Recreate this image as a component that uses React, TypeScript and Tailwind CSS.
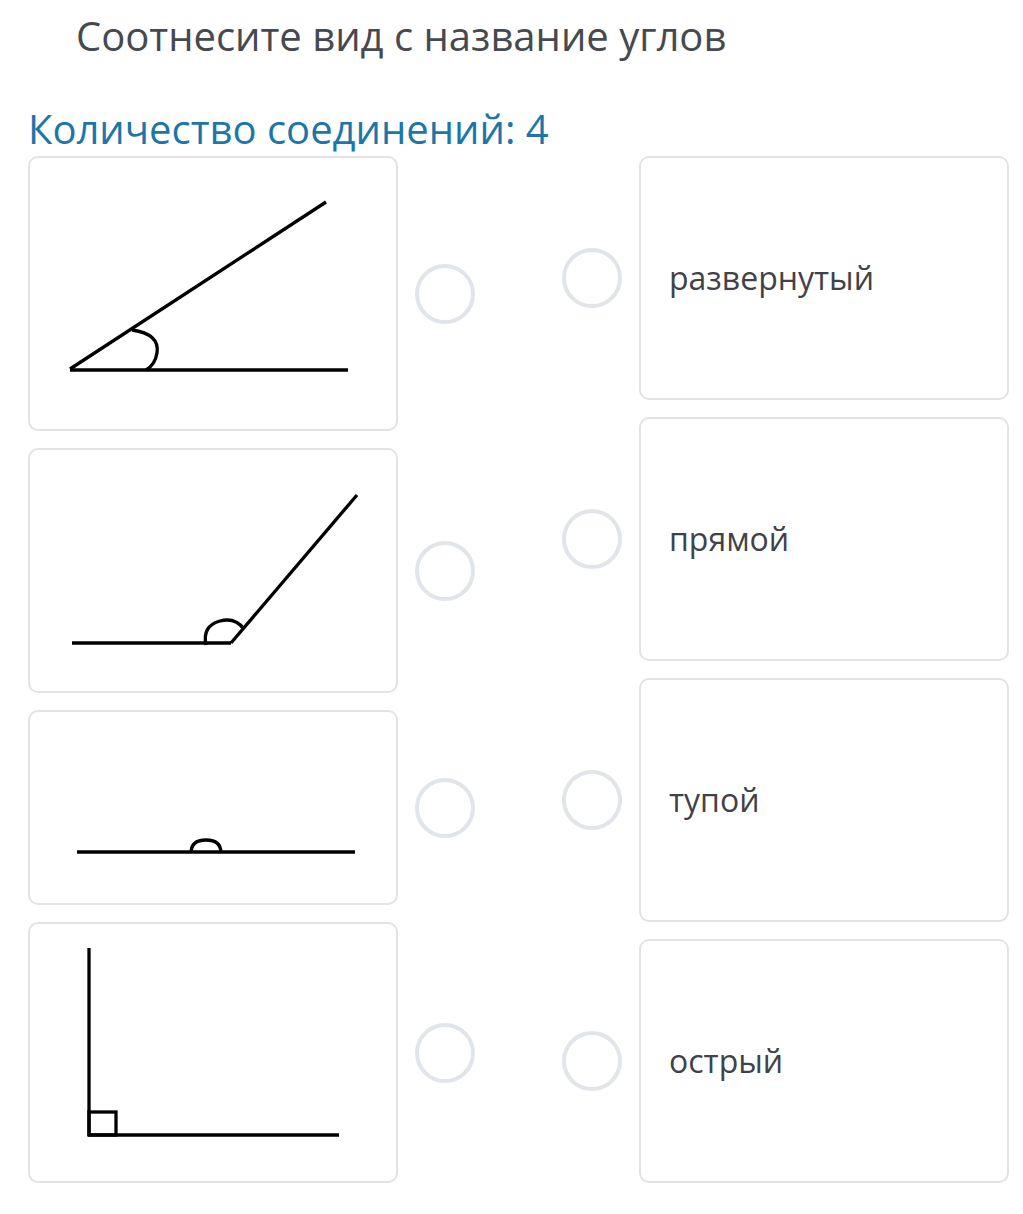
import React from "react";

const font = { fontFamily: '"Open Sans", "Noto Sans", sans-serif' };

function Circle() {
  return <div className="w-[60px] h-[60px] rounded-full border-[4px] border-[#e1e5e9] shrink-0" />;
}

function Card({ h, children }: { h: number; children: React.ReactNode }) {
  return (
    <div
      className="w-[370px] rounded-[10px] border-2 border-[#e3e3e3] bg-white relative shrink-0"
      style={{ height: h }}
    >
      {children}
    </div>
  );
}

function Angle1() {
  return (
    <svg width="366" height="270" className="absolute left-0 top-0" fill="none" stroke="#000" strokeWidth="3.3">
      <line x1="40" y1="211" x2="296" y2="44" />
      <line x1="40" y1="212" x2="318" y2="212" />
      <path d="M102 172 Q130 176 127 195 Q125 207 116 212" />
    </svg>
  );
}
function Angle2() {
  return (
    <svg width="366" height="240" className="absolute left-0 top-0" fill="none" stroke="#000" strokeWidth="3.3">
      <line x1="42" y1="193" x2="201" y2="193" />
      <line x1="201" y1="193" x2="327" y2="45" />
      <path d="M176 195 Q172 176 190 171 Q205 167 214 179" />
    </svg>
  );
}
function Angle3() {
  return (
    <svg width="366" height="190" className="absolute left-0 top-0" fill="none" stroke="#000" strokeWidth="3.3">
      <line x1="47" y1="140" x2="325" y2="140" />
      <path d="M161 141 Q161 128 176 128 Q191 128 191 141" />
    </svg>
  );
}
function Angle4() {
  return (
    <svg width="366" height="256" className="absolute left-0 top-0" fill="none" stroke="#000" strokeWidth="3.3">
      <line x1="59" y1="24" x2="59" y2="212" />
      <line x1="58" y1="211" x2="309" y2="211" />
      <rect x="59" y="188" width="27" height="23" />
    </svg>
  );
}

function Word({ h, text }: { h: number; text: string }) {
  return (
    <Card h={h}>
      <div className="h-full flex items-center pl-[28px] text-[32px] text-[#3f4347] [font-stretch:93%]">{text}</div>
    </Card>
  );
}

export default function App() {
  return (
    <div className="w-[1023px] h-[1214px] bg-white overflow-hidden" style={font}>
      <div className="pt-[12px] pl-[76px] text-[40px] leading-[48px] text-[#46494d] [font-stretch:94%]">
        Соотнесите вид с название углов
      </div>
      <div className="mt-[45px] pl-[28px] text-[40px] leading-[48px] text-[#1c77a8] [font-stretch:94%]">
        Количество соединений: 4
      </div>
      <div className="mt-[3px] flex">
        <div className="pl-[28px] flex flex-col gap-[17px]">
          <div className="flex items-center gap-[17px]">
            <Card h={275}><Angle1 /></Card>
            <Circle />
          </div>
          <div className="flex items-center gap-[17px]">
            <Card h={245}><Angle2 /></Card>
            <Circle />
          </div>
          <div className="flex items-center gap-[17px]">
            <Card h={195}><Angle3 /></Card>
            <Circle />
          </div>
          <div className="flex items-center gap-[17px]">
            <Card h={261}><Angle4 /></Card>
            <Circle />
          </div>
        </div>
        <div className="ml-[87px] flex flex-col gap-[17px]">
          {["развернутый", "прямой", "тупой", "острый"].map((t) => (
            <div key={t} className="flex items-center gap-[17px]">
              <Circle />
              <Word h={244} text={t} />
            </div>
          ))}
        </div>
      </div>
    </div>
  );
}
